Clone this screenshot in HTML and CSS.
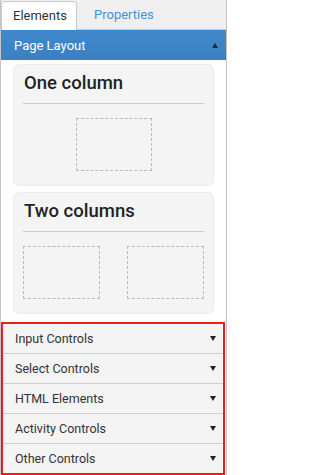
FILE: index.html
```html
<!DOCTYPE html>
<html>
<head>
<meta charset="utf-8">
<link rel="stylesheet" href="styles.css">
</head>
<body>
<div class="panel">
  <div class="tabs">
    <div class="tab active">Elements</div>
    <div class="tab">Properties</div>
  </div>
  <div class="header">
    <span>Page Layout</span>
    <span class="tri-up"></span>
  </div>
  <div class="content">
    <div class="card">
      <div class="card-title">One column</div>
      <div class="cols one">
        <div class="slot"></div>
      </div>
    </div>
    <div class="card">
      <div class="card-title">Two columns</div>
      <div class="cols two">
        <div class="slot"></div>
        <div class="slot"></div>
      </div>
    </div>
  </div>
  <div class="groups">
    <div class="group"><span>Input Controls</span><span class="tri-down"></span></div>
    <div class="group"><span>Select Controls</span><span class="tri-down"></span></div>
    <div class="group"><span>HTML Elements</span><span class="tri-down"></span></div>
    <div class="group"><span>Activity Controls</span><span class="tri-down"></span></div>
    <div class="group"><span>Other Controls</span><span class="tri-down"></span></div>
  </div>
</div>
</body>
</html>
```

FILE: styles.css
```css
* { box-sizing: border-box; }
html, body { margin: 0; padding: 0; background: #fff; }
body { font-family: Roboto, "Liberation Sans", Arial, sans-serif; color: #333; }

.panel {
  width: 227px;
  height: 475px;
  border-left: 1px solid #c6c6c6;
  border-right: 1px solid #c6c6c6;
  background: #fff;
  overflow: hidden;
}

.tabs {
  display: flex;
  height: 30px;
  padding-top: 1px;
  background: #efefef;
  border-bottom: 1px solid #c9c9c9;
}
.tab {
  height: 29px;
  line-height: 28px;
  font-size: 13px;
  color: #4a8fd6;
  padding: 0 12px 0 11px;
}
.tab.active {
  width: 76px;
  background: #fff;
  color: #333;
  border: 1px solid #c9c9c9;
  border-bottom: none;
  border-radius: 4px 4px 0 0;
  padding-left: 11px;
}
.tab + .tab { padding-left: 17px; }

.header {
  height: 30px;
  display: flex;
  align-items: center;
  justify-content: space-between;
  padding: 0 8px 0 13px;
  background: linear-gradient(#4189cb, #3a80c2);
  color: #fff;
  font-size: 13px;
}
.tri-up {
  width: 0; height: 0;
  border-left: 3px solid transparent;
  border-right: 3px solid transparent;
  border-bottom: 5px solid #1f2a36;
}

.content {
  padding: 4px 12px 8px 12px;
  display: flex;
  flex-direction: column;
  gap: 6px;
}
.card {
  background: #f4f4f4;
  border: 1px solid #ececec;
  border-radius: 6px;
  padding: 0 9px 14px 9px;
}
.card-title {
  font-size: 18.5px;
  font-weight: 500;
  line-height: 22px;
  color: #222;
  padding: 7px 0 9px 1px;
  border-bottom: 1px solid #cbcbcb;
}
.cols {
  margin-top: 14px;
  display: flex;
  height: 53px;
}
.cols.one { justify-content: center; }
.cols.two { justify-content: space-between; }
.slot {
  height: 53px;
  border: 1px dashed #b9b9b9;
}
.cols.one .slot { width: 76px; }
.cols.two .slot { width: 77px; }

.groups {
  width: 224px;
  border: 2px solid #ee1c1c;
  background: #f4f4f4;
}
.group {
  height: 30px;
  display: flex;
  align-items: center;
  justify-content: space-between;
  padding: 0 7px 0 12px;
  font-size: 12.5px;
  color: #333;
  border-top: 1px solid #cfcfcf;
}
.group:first-child { border-top: none; height: 29px; }
.tri-down {
  width: 0; height: 0;
  border-left: 3px solid transparent;
  border-right: 3px solid transparent;
  border-top: 5px solid #222;
}
```
